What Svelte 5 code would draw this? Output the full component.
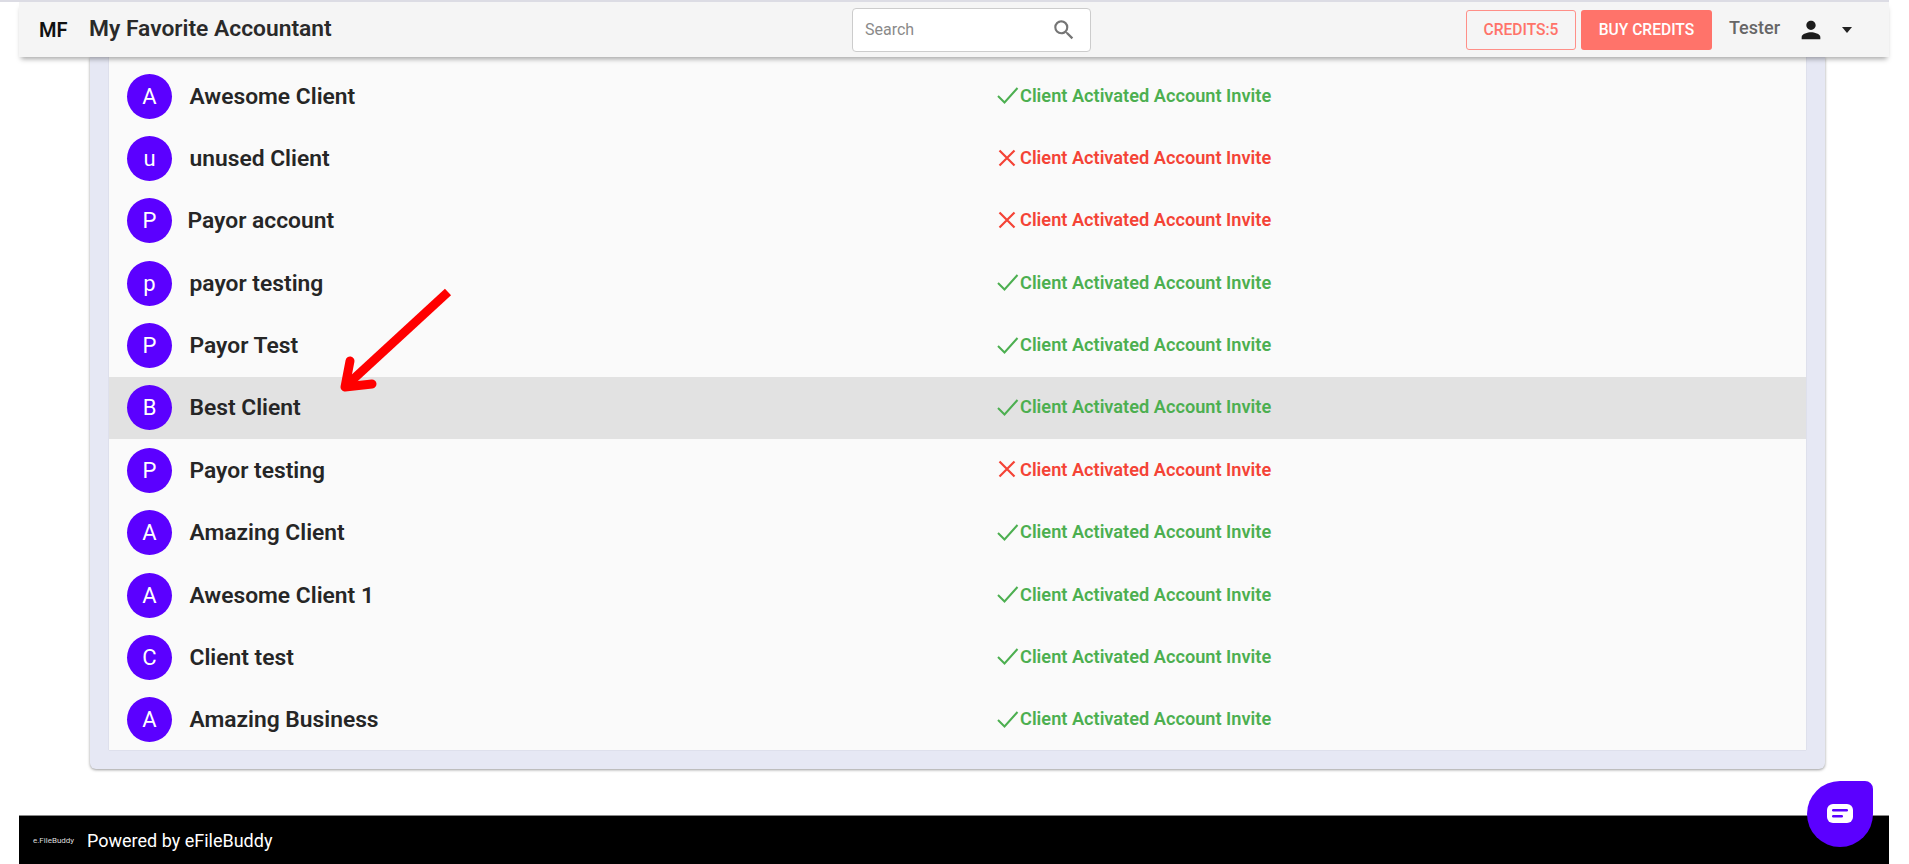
<script>
  const clients = [
    { name: "Awesome Client", ok: true },
    { name: "unused Client", ok: false },
    { name: "Payor account", ok: false, tight: true },
    { name: "payor testing", ok: true },
    { name: "Payor Test", ok: true },
    { name: "Best Client", ok: true, active: true },
    { name: "Payor testing", ok: false },
    { name: "Amazing Client", ok: true },
    { name: "Awesome Client 1", ok: true },
    { name: "Client test", ok: true },
    { name: "Amazing Business", ok: true },
  ];
</script>

<div class="page">
  <div class="topline"></div>
  <div class="shell">
    <header class="bar">
      <span class="initials">MF</span>
      <span class="firm">My Favorite Accountant</span>
      <div class="search">
        <span>Search</span>
        <svg width="26" height="26" viewBox="0 0 24 24" fill="#757575">
          <path d="M15.5 14h-.79l-.28-.27A6.47 6.47 0 0 0 16 9.5 6.5 6.5 0 1 0 9.5 16c1.61 0 3.09-.59 4.23-1.57l.27.28v.79l5 4.99L20.49 19l-4.99-5zm-6 0C7.01 14 5 11.99 5 9.5S7.01 5 9.5 5 14 7.01 14 9.5 11.99 14 9.5 14z" />
        </svg>
      </div>
      <div class="right">
        <button class="credits">CREDITS:5</button>
        <button class="buy">BUY CREDITS</button>
        <span class="user">Tester</span>
        <svg class="person" width="28" height="28" viewBox="0 0 24 24" fill="#1c1c1c">
          <path d="M12 12c2.21 0 4-1.79 4-4s-1.79-4-4-4-4 1.79-4 4 1.79 4 4 4zm0 2c-2.67 0-8 1.34-8 4v2h16v-2c0-2.66-5.33-4-8-4z" />
        </svg>
        <span class="caret"></span>
      </div>
    </header>

    <main class="content">
      <section class="card">
        <ul class="list">
          {#each clients as c}
            <li class="row" class:active={c.active}>
              <span class="avatar">{c.name[0]}</span>
              <span class="name" class:tight={c.tight}>{c.name}</span>
              <span class="status" class:bad={!c.ok}>
                {#if c.ok}
                  <svg width="22" height="18" viewBox="0 0 22 18" fill="none" stroke="#4caf50" stroke-width="2">
                    <path d="M1 10l6.5 6.5L20.5 2" />
                  </svg>
                {:else}
                  <svg width="22" height="18" viewBox="0 0 22 18" fill="none" stroke="#f44336" stroke-width="2.2">
                    <path d="M2.5 1.5l15 15M17.5 1.5l-15 15" />
                  </svg>
                {/if}
                Client Activated Account Invite
              </span>
            </li>
          {/each}
        </ul>
      </section>
    </main>

    <footer class="foot">
      <span class="logo">e.FileBuddy</span>
      <span>Powered by eFileBuddy</span>
    </footer>
  </div>

  <svg class="arrow" width="1909" height="864" viewBox="0 0 1909 864" fill="none" stroke="#ff0000" stroke-linecap="round" stroke-linejoin="round">
    <path d="M448 292L348 384" stroke-width="9" stroke-linecap="butt" />
    <path d="M350 361L345 387L372 384" stroke-width="9" />
  </svg>

  <button class="chat" aria-label="Chat">
    <svg width="26" height="20" viewBox="0 0 26 20">
      <rect x="0" y="0" width="26" height="19" rx="6" fill="#fff" />
      <rect x="5" y="5" width="16" height="2.4" rx="1.2" fill="#5b00ff" />
      <rect x="5" y="11" width="11" height="2.4" rx="1.2" fill="#5b00ff" />
    </svg>
  </button>
</div>

<style>
  :global(body) {
    background: #fff;
    font-family: Roboto, "Liberation Sans", sans-serif;
  }

  .page {
    height: 864px;
    overflow: hidden;
  }

  .topline {
    height: 2px;
    background: #dcdce4;
    width: 1889px;
  }

  .shell {
    margin: 0 20px 0 19px;
  }

  .bar {
    position: relative;
    z-index: 2;
    height: 55px;
    display: flex;
    align-items: center;
    background: #f5f5f5;
    box-shadow: 0 4px 5px -2px rgba(0, 0, 0, 0.35);
    padding: 0 20px;
  }

  .initials {
    font-size: 20px;
    font-weight: 600;
    color: #111;
    width: 50px;
  }

  .firm {
    font-size: 22.8px;
    font-weight: 600;
    color: #2a2a2a;
    width: 763px;
    position: relative;
    top: -1px;
  }

  .search {
    width: 239px;
    height: 44px;
    box-sizing: border-box;
    background: #fff;
    border: 1px solid #ccc;
    border-radius: 4px;
    display: flex;
    align-items: center;
    justify-content: space-between;
    padding: 0 13px 0 12px;
    font-size: 16px;
    color: #8a8a8a;
  }

  .right {
    margin-left: auto;
    margin-right: 9px;
    display: flex;
    align-items: center;
  }

  button {
    font-family: inherit;
    cursor: pointer;
  }

  .credits,
  .buy {
    height: 40px;
    border-radius: 3px;
    font-size: 15.6px;
    font-weight: 500;
    box-sizing: border-box;
  }

  .credits {
    width: 110px;
    background: transparent;
    border: 1px solid #ff8f88;
    color: #ff7369;
  }

  .buy {
    width: 131px;
    margin-left: 5px;
    background: #ff736a;
    border: none;
    color: #fff;
  }

  .user {
    margin-left: 17px;
    font-size: 18px;
    font-weight: 500;
    color: #666;
    position: relative;
    top: -2px;
  }

  .person {
    margin-left: 17px;
  }

  .caret {
    margin-left: 17px;
    margin-right: 8px;
    border-left: 5.5px solid transparent;
    border-right: 5.5px solid transparent;
    border-top: 6px solid #222;
  }

  .content {
    padding: 0 64px 0 71px;
    height: 758px;
  }

  .card {
    background: #e6e8f4;
    padding: 0 19px 19px;
    border-radius: 0 0 6px 6px;
    box-shadow: 0 1px 3px rgba(0, 0, 0, 0.4);
  }

  .list {
    list-style: none;
    margin: 0;
    padding: 8px 0 0;
    background: #fafafa;
    height: 693px;
    box-sizing: border-box;
    box-shadow: 0 0 1px rgba(0, 0, 0, 0.2);
  }

  .row {
    height: 62.36px;
    display: flex;
    align-items: center;
    padding-left: 18px;
  }

  .row.active {
    background: #e2e2e2;
  }

  .avatar {
    width: 45px;
    height: 45px;
    flex: none;
    border-radius: 50%;
    background: #5b00ff;
    color: #fff;
    font-size: 22px;
    display: flex;
    align-items: center;
    justify-content: center;
  }

  .name {
    margin-left: 17.5px;
    width: 807.5px;
    font-size: 22.8px;
    font-weight: 600;
    color: #262626;
  }

  .name.tight {
    margin-left: 15.5px;
    width: 809.5px;
  }

  .status {
    display: flex;
    align-items: center;
    gap: 1px;
    font-size: 18.2px;
    font-weight: 600;
    color: #4caf50;
    position: relative;
    top: -1px;
  }

  .status.bad {
    color: #f44336;
  }

  .foot {
    height: 49px;
    background: #000;
    display: flex;
    align-items: center;
    color: #fff;
    font-size: 18px;
    border-top: 1px solid #888;
    box-sizing: border-box;
  }

  .logo {
    font-size: 8px;
    margin: 0 14px 0 14px;
    width: 40px;
    white-space: nowrap;
    color: #ddd;
  }

  .arrow {
    position: absolute;
    top: 0;
    left: 0;
    z-index: 3;
    pointer-events: none;
  }

  .chat {
    position: absolute;
    left: 1807px;
    top: 781px;
    z-index: 4;
    width: 66px;
    height: 66px;
    padding: 0;
    border: none;
    background: #5b00ff;
    border-radius: 50% 8px 50% 50%;
    display: flex;
    align-items: center;
    justify-content: center;
  }
</style>
